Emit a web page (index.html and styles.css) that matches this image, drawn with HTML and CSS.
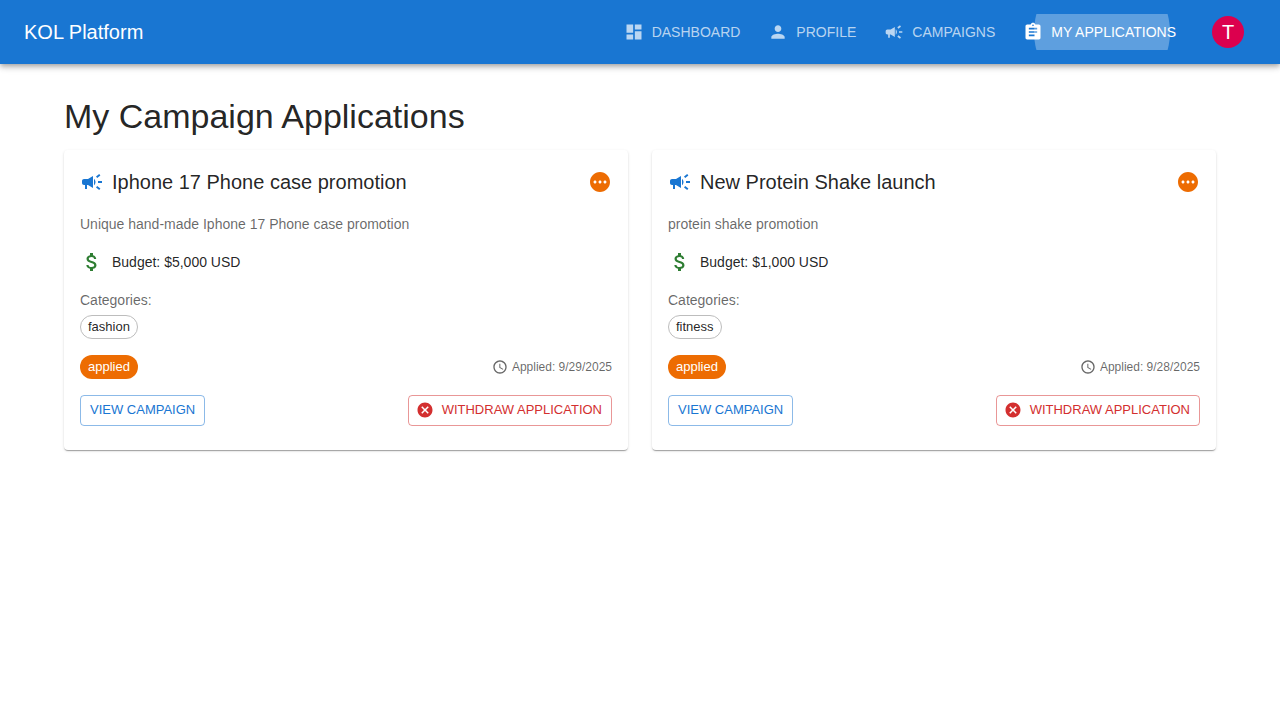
FILE: index.html
```html
<!DOCTYPE html>
<html lang="en">
<head>
<meta charset="utf-8">
<meta name="viewport" content="width=device-width, initial-scale=1">
<title>KOL Platform</title>
<link rel="stylesheet" href="styles.css">
</head>
<body>
<svg class="sprite" aria-hidden="true">
  <symbol id="i-dashboard" viewBox="0 0 24 24"><path d="M3 13h8V3H3v10zm0 8h8v-6H3v6zm10 0h8V11h-8v10zm0-18v6h8V3h-8z"/></symbol>
  <symbol id="i-person" viewBox="0 0 24 24"><path d="M12 12c2.21 0 4-1.79 4-4s-1.790-4-4-4-4 1.790-4 4 1.790 4 4 4zm0 2c-2.670 0-8 1.340-8 4v2h16v-2c0-2.660-5.330-4-8-4z"/></symbol>
  <symbol id="i-campaign" viewBox="0 0 24 24"><path d="M18 11v2h4v-2h-4zm-2 6.610c.96.71 2.210 1.650 3.200 2.390.4-.53.8-1.070 1.200-1.600-.99-.74-2.240-1.680-3.200-2.400-.4.540-.8 1.080-1.200 1.610zM20.400 5.600c-.4-.53-.8-1.070-1.200-1.600-.99.740-2.240 1.680-3.200 2.400.4.530.8 1.070 1.200 1.600.96-.72 2.210-1.650 3.200-2.400zM4 9c-1.100 0-2 .9-2 2v2c0 1.100.9 2 2 2h1v4h2v-4h1l5 3V6L8 9H4zm11.500 3c0-1.330-.58-2.530-1.500-3.350v6.690c.92-.81 1.500-2.010 1.500-3.340z"/></symbol>
  <symbol id="i-assignment" viewBox="0 0 24 24"><path d="M19 3h-4.180C14.400 1.840 13.300 1 12 1c-1.300 0-2.400.840-2.820 2H5c-1.100 0-2 .9-2 2v14c0 1.100.9 2 2 2h14c1.100 0 2-.9 2-2V5c0-1.100-.9-2-2-2zm-7 0c.55 0 1 .45 1 1s-.45 1-1 1-1-.45-1-1 .45-1 1-1zm2 14H7v-2h7v2zm3-4H7v-2h10v2zm0-4H7V7h10v2z"/></symbol>
  <symbol id="i-pending" viewBox="0 0 24 24"><path d="M12 2C6.480 2 2 6.480 2 12s4.480 10 10 10 10-4.480 10-10S17.520 2 12 2zM7 13.500c-.83 0-1.500-.67-1.500-1.500s.67-1.500 1.500-1.500 1.500.67 1.500 1.500-.67 1.500-1.500 1.500zm5 0c-.83 0-1.500-.67-1.500-1.500s.67-1.500 1.500-1.500 1.500.67 1.500 1.500-.67 1.500-1.500 1.500zm5 0c-.83 0-1.500-.67-1.500-1.500s.67-1.500 1.500-1.500 1.500.67 1.500 1.500-.67 1.500-1.500 1.500z"/></symbol>
  <symbol id="i-money" viewBox="0 0 24 24"><path d="M11.800 10.900c-2.270-.59-3-1.200-3-2.150 0-1.090 1.010-1.850 2.700-1.850 1.780 0 2.440.85 2.500 2.100h2.210c-.07-1.720-1.120-3.300-3.210-3.810V3h-3v2.160c-1.940.42-3.500 1.680-3.500 3.610 0 2.310 1.910 3.460 4.700 4.130 2.500.6 3 1.480 3 2.410 0 .69-.49 1.790-2.700 1.790-2.060 0-2.870-.92-2.980-2.100h-2.200c.12 2.190 1.760 3.420 3.680 3.830V21h3v-2.150c1.950-.37 3.500-1.500 3.500-3.550 0-2.840-2.430-3.810-4.700-4.400z"/></symbol>
  <symbol id="i-clock" viewBox="0 0 24 24"><path d="M11.990 2C6.470 2 2 6.480 2 12s4.470 10 9.990 10C17.520 22 22 17.520 22 12S17.520 2 11.990 2zM12 20c-4.420 0-8-3.580-8-8s3.580-8 8-8 8 3.580 8 8-3.580 8-8 8zm.5-13H11v6l5.250 3.150.75-1.230-4.500-2.670z"/></symbol>
  <symbol id="i-cancel" viewBox="0 0 24 24"><path d="M12 2C6.470 2 2 6.470 2 12s4.470 10 10 10 10-4.470 10-10S17.530 2 12 2zm5 13.590L15.590 17 12 13.410 8.410 17 7 15.590 10.590 12 7 8.410 8.410 7 12 10.590 15.590 7 17 8.410 13.410 12 17 15.590z"/></symbol>
</svg>

<header class="appbar">
  <div class="brand">KOL Platform</div>
  <nav class="nav" aria-label="Main">
    <a class="nav-link" href="#dashboard"><svg class="icon icon-sm"><use href="#i-dashboard"/></svg>Dashboard</a>
    <a class="nav-link" href="#profile"><svg class="icon icon-sm"><use href="#i-person"/></svg>Profile</a>
    <a class="nav-link" href="#campaigns"><svg class="icon icon-sm"><use href="#i-campaign"/></svg>Campaigns</a>
    <a class="nav-link nav-link-active" href="#applications" aria-current="page"><svg class="icon icon-sm"><use href="#i-assignment"/></svg>My Applications<span class="ripple"></span></a>
    <button class="account" type="button" aria-label="Account"><span class="avatar">T</span></button>
  </nav>
</header>

<main class="container">
  <h1 class="page-title">My Campaign Applications</h1>
  <div class="cards">
    <article class="card">
      <div class="card-head">
        <svg class="icon icon-primary"><use href="#i-campaign"/></svg>
        <h2 class="card-title">Iphone 17 Phone case promotion</h2>
        <svg class="icon icon-warning"><use href="#i-pending"/></svg>
      </div>
      <p class="description">Unique hand-made Iphone 17 Phone case promotion</p>
      <div class="budget"><svg class="icon icon-success"><use href="#i-money"/></svg>Budget: $5,000 USD</div>
      <div class="categories">
        <p class="label">Categories:</p>
        <span class="chip chip-outlined">fashion</span>
      </div>
      <div class="row">
        <span class="chip chip-warning">applied</span>
        <span class="date"><svg class="icon icon-xs"><use href="#i-clock"/></svg>Applied: 9/29/2025</span>
      </div>
      <div class="row">
        <button class="btn btn-primary" type="button">View Campaign</button>
        <button class="btn btn-error" type="button"><svg class="icon btn-icon"><use href="#i-cancel"/></svg>Withdraw Application</button>
      </div>
    </article>
    <article class="card">
      <div class="card-head">
        <svg class="icon icon-primary"><use href="#i-campaign"/></svg>
        <h2 class="card-title">New Protein Shake launch</h2>
        <svg class="icon icon-warning"><use href="#i-pending"/></svg>
      </div>
      <p class="description">protein shake promotion</p>
      <div class="budget"><svg class="icon icon-success"><use href="#i-money"/></svg>Budget: $1,000 USD</div>
      <div class="categories">
        <p class="label">Categories:</p>
        <span class="chip chip-outlined">fitness</span>
      </div>
      <div class="row">
        <span class="chip chip-warning">applied</span>
        <span class="date"><svg class="icon icon-xs"><use href="#i-clock"/></svg>Applied: 9/28/2025</span>
      </div>
      <div class="row">
        <button class="btn btn-primary" type="button">View Campaign</button>
        <button class="btn btn-error" type="button"><svg class="icon btn-icon"><use href="#i-cancel"/></svg>Withdraw Application</button>
      </div>
    </article>
  </div>
</main>
</body>
</html>
```
FILE: styles.css
```css
* {
  box-sizing: border-box;
}

body {
  margin: 0;
  background: #fff;
  color: rgba(0, 0, 0, 0.87);
  font-family: "Liberation Sans", Arial, sans-serif;
  font-size: 14px;
  line-height: 20px;
}

h1, h2, p {
  margin: 0;
  font-weight: 400;
}

.sprite {
  display: none;
}

.icon {
  width: 24px;
  height: 24px;
  flex: none;
  fill: currentColor;
}

.icon-sm {
  width: 20px;
  height: 20px;
}

.icon-xs {
  width: 16px;
  height: 16px;
}

.icon-primary {
  color: #1976d2;
}

.icon-warning {
  color: #ed6c02;
}

.icon-success {
  color: #2e7d32;
}

.appbar {
  display: flex;
  align-items: center;
  justify-content: space-between;
  min-height: 64px;
  padding: 0 24px;
  background: #1976d2;
  color: #fff;
  box-shadow: 0 2px 4px -1px rgba(0, 0, 0, 0.2), 0 4px 5px 0 rgba(0, 0, 0, 0.14), 0 1px 10px 0 rgba(0, 0, 0, 0.12);
}

.brand {
  font-size: 20px;
  line-height: 32px;
}

.nav {
  display: flex;
  align-items: center;
  gap: 16px;
}

.nav-link {
  position: relative;
  display: flex;
  align-items: center;
  gap: 8px;
  height: 36px;
  padding: 0 8px 0 4px;
  border-radius: 4px;
  overflow: hidden;
  color: rgba(255, 255, 255, 0.7);
  text-decoration: none;
  text-transform: uppercase;
  white-space: nowrap;
}

.nav-link-active {
  color: #fff;
}

.ripple {
  position: absolute;
  top: 50%;
  left: 50%;
  width: 136px;
  height: 136px;
  border-radius: 50%;
  background: rgba(255, 255, 255, 0.3);
  transform: translate(-50%, -50%);
  pointer-events: none;
}

.account {
  padding: 12px;
  border: 0;
  background: none;
  cursor: pointer;
}

.avatar {
  display: flex;
  align-items: center;
  justify-content: center;
  width: 32px;
  height: 32px;
  border-radius: 50%;
  background: #dc004e;
  color: #fff;
  font-family: "Liberation Sans", Arial, sans-serif;
  font-size: 20px;
  line-height: 20px;
}

.container {
  max-width: 1200px;
  margin: 0 auto;
  padding: 32px 24px;
}

.page-title {
  margin-bottom: 14px;
  font-size: 34px;
  line-height: 40px;
}

.cards {
  display: grid;
  grid-template-columns: repeat(2, minmax(0, 1fr));
  gap: 24px;
}

.card {
  display: flex;
  flex-direction: column;
  gap: 16px;
  padding: 16px 16px 24px;
  border-radius: 4px;
  background: #fff;
  box-shadow: 0 2px 1px -1px rgba(0, 0, 0, 0.2), 0 1px 1px 0 rgba(0, 0, 0, 0.14), 0 1px 3px 0 rgba(0, 0, 0, 0.12);
}

.card-head {
  display: flex;
  align-items: center;
  gap: 8px;
}

.card-title {
  flex: 1;
  font-size: 20px;
  line-height: 32px;
}

.description,
.label,
.date {
  color: rgba(0, 0, 0, 0.6);
}

.budget {
  display: flex;
  align-items: center;
  gap: 8px;
}

.categories {
  display: flex;
  flex-direction: column;
  align-items: flex-start;
  gap: 5px;
}

.chip {
  display: inline-flex;
  align-items: center;
  height: 24px;
  padding: 0 8px;
  border-radius: 16px;
  font-size: 13px;
}

.chip-outlined {
  padding: 0 7px;
  border: 1px solid #bdbdbd;
}

.chip-warning {
  background: #ed6c02;
  color: #fff;
}

.row {
  display: flex;
  align-items: center;
  justify-content: space-between;
}

.date {
  display: flex;
  align-items: center;
  gap: 4px;
  font-size: 12px;
}

.btn {
  display: inline-flex;
  align-items: center;
  gap: 8px;
  padding: 2px 9px 4px;
  border: 1px solid;
  border-radius: 4px;
  background: none;
  font-family: inherit;
  font-size: 13px;
  line-height: 23px;
  text-transform: uppercase;
  cursor: pointer;
}

.btn-primary {
  border-color: rgba(25, 118, 210, 0.5);
  color: #1976d2;
}

.btn-error {
  padding-left: 7px;
  border-color: rgba(211, 47, 47, 0.5);
  color: #d32f2f;
}

.btn-icon {
  width: 18px;
  height: 18px;
}
```
